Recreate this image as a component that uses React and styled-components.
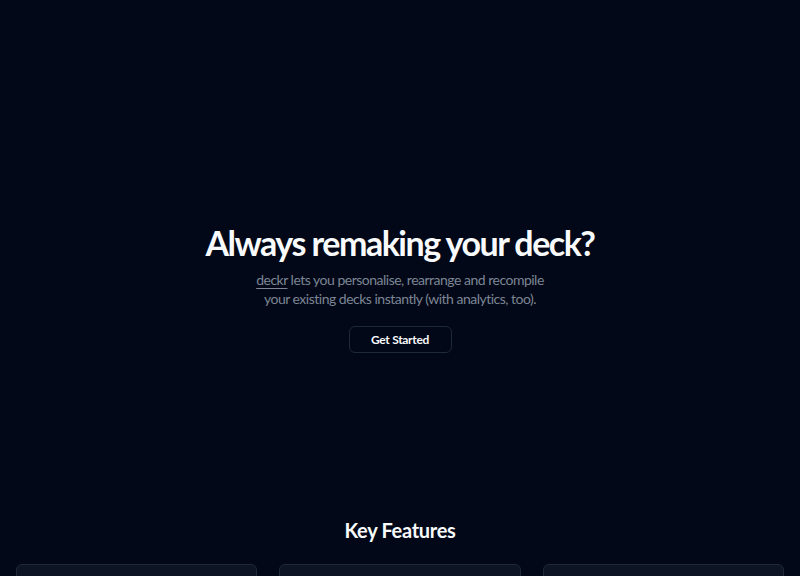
import styled, { createGlobalStyle } from 'styled-components';

const GlobalStyle = createGlobalStyle`
  html, body {
    margin: 0;
    padding: 0;
    background: #020817;
  }
  body {
    font-family: Lato, "Open Sans", sans-serif;
    color: #f8fafc;
  }
`;

const features = [{ title: 'Personalise' }, { title: 'Rearrange' }, { title: 'Analytics' }];

export default function App() {
  return (
    <>
      <GlobalStyle />
      <Page>
        <Hero>
          <Title>Always remaking your deck?</Title>
          <Subtitle>
            <Brand>deckr</Brand> lets you personalise, rearrange and recompile
            <br />
            your existing decks instantly (with analytics, too).
          </Subtitle>
          <Button>Get Started</Button>
        </Hero>
        <Features>
          <SectionTitle>Key Features</SectionTitle>
          <Grid>
            {features.map((f) => (
              <Card key={f.title} />
            ))}
          </Grid>
        </Features>
      </Page>
    </>
  );
}

const Page = styled.div`
  height: 576px;
  background: #020817;
  overflow: hidden;
`;

const Hero = styled.section`
  display: flex;
  flex-direction: column;
  align-items: center;
  text-align: center;
  padding-top: 222px;
`;

const Title = styled.h1`
  margin: 0;
  font-size: 34px;
  line-height: 42px;
  font-weight: 700;
  color: #f8fafc;
  letter-spacing: -1.5px;
`;

const Subtitle = styled.p`
  margin: 6px 0 0;
  font-size: 14px;
  line-height: 19px;
  letter-spacing: -0.5px;
  color: #7c8594;
`;

const Brand = styled.span`
  text-decoration: underline;
  text-underline-offset: 3px;
`;

const Button = styled.button`
  margin-top: 18px;
  width: 103px;
  height: 27px;
  border: 1px solid #1e293b;
  border-radius: 6px;
  background: transparent;
  color: #f8fafc;
  font-family: inherit;
  font-size: 12px;
  font-weight: 700;
  letter-spacing: -0.3px;
  cursor: pointer;
`;

const Features = styled.section`
  display: flex;
  flex-direction: column;
  align-items: center;
  padding: 163px 16px 0;
`;

const SectionTitle = styled.h2`
  margin: 0;
  font-size: 20px;
  line-height: 28px;
  font-weight: 700;
  letter-spacing: -0.3px;
  color: #f8fafc;
`;

const Grid = styled.div`
  align-self: stretch;
  display: grid;
  grid-template-columns: repeat(3, 1fr);
  gap: 22px;
  margin-top: 20px;
`;

const Card = styled.div`
  height: 160px;
  border: 1px solid #1e293b;
  border-radius: 6px;
  background: linear-gradient(180deg, #0d1525 0%, #0a1120 100%);
`;
